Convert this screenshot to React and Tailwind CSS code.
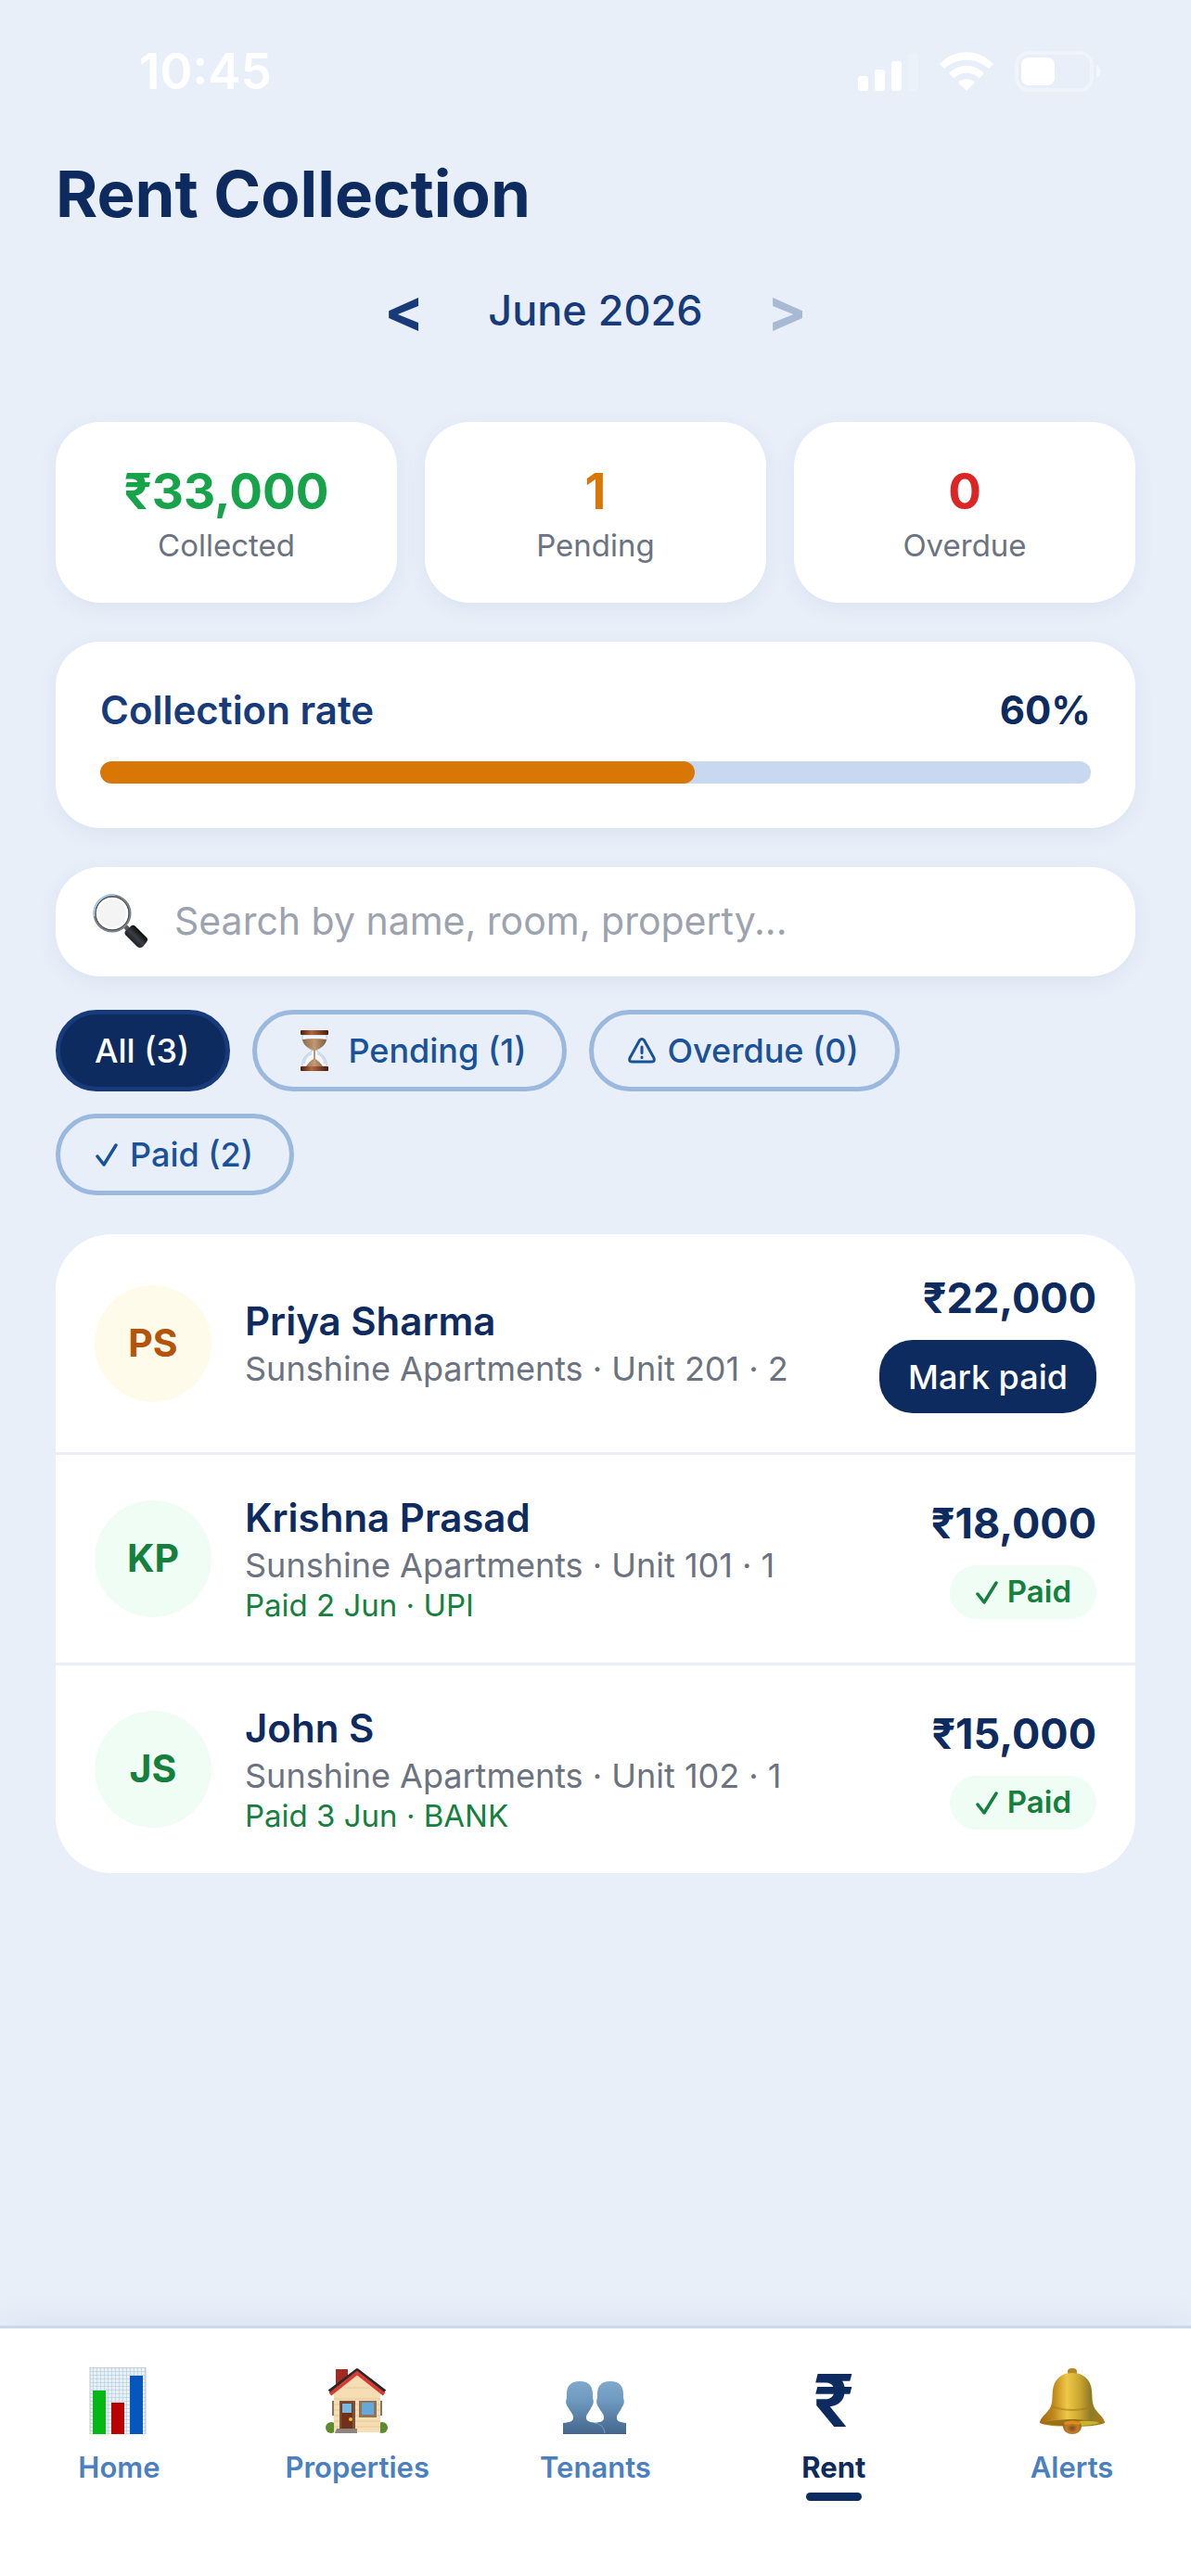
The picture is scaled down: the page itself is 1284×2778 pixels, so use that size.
const stats = [
    { value: '₹33,000', label: 'Collected', color: 'text-[#16a34a]' },
    { value: '1', label: 'Pending', color: 'text-[#d97706]' },
    { value: '0', label: 'Overdue', color: 'text-[#dc2626]' },
];

const payments = [
    { initials: 'PS', name: 'Priya Sharma', unit: 'Sunshine Apartments · Unit 201 · 2', amount: '₹22,000' },
    { initials: 'KP', name: 'Krishna Prasad', unit: 'Sunshine Apartments · Unit 101 · 1', amount: '₹18,000', paid: 'Paid 2 Jun · UPI' },
    { initials: 'JS', name: 'John S', unit: 'Sunshine Apartments · Unit 102 · 1', amount: '₹15,000', paid: 'Paid 3 Jun · BANK' },
];

const StatusIcons = () => (
    <div className="flex items-center gap-[23px]">
        <svg width="65" height="42" viewBox="0 0 65 42" fill="#fff" aria-hidden="true">
            <rect x="0" y="26" width="11" height="16" rx="3" />
            <rect x="18" y="19" width="11" height="23" rx="3" />
            <rect x="36" y="10" width="11" height="32" rx="3" />
            <rect x="54" y="1" width="11" height="41" rx="3" opacity="0.2" />
        </svg>
        <svg width="58" height="42" viewBox="0 0 58 42" fill="#fff" aria-hidden="true">
            <path d="M0 13C16-4 42-4 58 13L53 18C39 5.500 19 5.500 5 18Z" />
            <path d="M10 23C21 12 37 12 48 23L43 28.500C34.500 20.500 23.500 20.500 15 28.500Z" />
            <path d="M20 33C25 28 33 28 38 33L29 42Z" />
        </svg>
        <svg width="94" height="44" viewBox="0 0 94 44" fill="none" aria-hidden="true">
            <rect x="2" y="2" width="81" height="40" rx="13" stroke="#fff" strokeWidth="3.500" opacity="0.4" />
            <rect x="7" y="7" width="36" height="30" rx="8" fill="#fff" />
            <path d="M88 15C94 18 94 26 88 29Z" fill="#fff" opacity="0.5" />
        </svg>
    </div>
);

const SearchIcon = () => (
    <svg width="60" height="60" viewBox="0 0 60 60" aria-hidden="true">
        <defs>
            <linearGradient id="handle" x1="38" y1="50" x2="50" y2="38" gradientUnits="userSpaceOnUse">
                <stop offset="0" stopColor="#15171a" />
                <stop offset="0.5" stopColor="#3a3e44" />
                <stop offset="1" stopColor="#060606" />
            </linearGradient>
        </defs>
        <path d="M33 33L39 39" stroke="#55595d" strokeWidth="5" />
        <path d="M35 40L42 34Q44 33 46 35L58 47Q60 49 58 52L54 57Q51 59 48 57L35 44Q34 42 35 40Z" fill="url(#handle)" />
        <circle cx="21" cy="21" r="19" fill="#f4f4f4" stroke="#7d8489" strokeWidth="3" />
        <path d="M2 24A20 20 0 0 1 24 1" stroke="#a8c8ea" strokeWidth="2" fill="none" />
        <circle cx="21" cy="21" r="18" fill="none" stroke="#43474b" strokeWidth="1" />
        <circle cx="21" cy="21" r="16" fill="none" stroke="#fff" strokeWidth="2" />
    </svg>
);

const Hourglass = () => (
    <svg width="49" height="44" viewBox="-10 0 49 44" aria-hidden="true">
        <defs>
            <linearGradient id="wood" x1="0" x2="1">
                <stop offset="0" stopColor="#4c1d0d" />
                <stop offset="0.4" stopColor="#b3683f" />
                <stop offset="1" stopColor="#4a1b0c" />
            </linearGradient>
            <linearGradient id="sand" x1="0" x2="1">
                <stop offset="0" stopColor="#8b6a4d" />
                <stop offset="0.5" stopColor="#c29a72" />
                <stop offset="1" stopColor="#7d5b40" />
            </linearGradient>
        </defs>
        <path d="M2 5H28C29 14 24 18 17 22C24 26 29 31 28 39H2C1 31 6 26 13 22C6 18 1 14 2 5Z" fill="#f3f6fb" stroke="#bcc8d8" strokeWidth="1" />
        <path d="M2 10Q15 8 28 10C27 16 22 19 16 22V31Q20 33 24 39H6Q10 33 14 31V22C8 19 3 16 2 10Z" fill="url(#sand)" />
        <path d="M4 36C4 30 7 27 12 25M26 36C26 30 23 27 18 25" fill="none" stroke="#cddaf0" strokeWidth="2" />
        <rect width="30" height="5" rx="1" fill="url(#wood)" />
        <rect y="39" width="30" height="5" rx="1" fill="url(#wood)" />
    </svg>
);

const Warning = () => (
    <svg width="30" height="28" viewBox="0 0 30 28" fill="none" stroke="currentColor" strokeWidth="3" strokeLinejoin="round" strokeLinecap="round" aria-hidden="true">
        <path d="M12.500 3Q15 0 17.500 3L28 22Q29 26 26 26H4Q1 26 2 22Z" />
        <path d="M15 10V16.500M15 21V21.500" />
    </svg>
);

const Check = () => (
    <svg width="26" height="26" viewBox="0 0 26 26" fill="none" stroke="currentColor" strokeWidth="3.500" strokeLinecap="round" strokeLinejoin="round" aria-hidden="true">
        <path d="M3 15L10 24L23 3" />
    </svg>
);

const ChartIcon = () => (
    <svg width="72" height="72" viewBox="0 0 72 72" aria-hidden="true">
        <defs>
            <pattern id="grid" width="4" height="4" patternUnits="userSpaceOnUse">
                <rect width="4" height="4" fill="#eceff1" />
                <path d="M0 0H4M0 0V4" stroke="#b5d3ea" strokeWidth="1.500" />
            </pattern>
        </defs>
        <rect x="5" width="60" height="72" fill="url(#grid)" stroke="#c3c8cc" strokeWidth="1" />
        <rect x="8" y="25" width="14" height="47" fill="#05b817" />
        <rect x="28" y="38" width="14" height="34" fill="#b90202" />
        <rect x="48" y="9" width="14" height="63" fill="#0556bd" />
    </svg>
);

const HouseIcon = () => (
    <svg width="72" height="72" viewBox="0 0 72 72" aria-hidden="true">
        <rect x="13" y="2" width="13" height="24" fill="#a32a20" />
        <circle cx="8" cy="65" r="6" fill="#5c8c2e" />
        <circle cx="63" cy="65" r="6" fill="#5c8c2e" />
        <path d="M9 36H11V52H9ZM61 36H63V52H61Z" fill="#8a7663" />
        <path d="M11 28L36 6L61 28V70H11Z" fill="#f5deb3" />
        <path d="M11 34H61M11 40H61M11 46H61M11 52H61M11 58H61M11 64H61M22 22H50" stroke="#e5c896" strokeWidth="1" />
        <path d="M6 26L36 3L66 26" fill="none" stroke="#26292c" strokeWidth="4" strokeLinejoin="round" />
        <path d="M7 29L36 6L65 29" fill="none" stroke="#d83a31" strokeWidth="4" />
        <path d="M17 36H34V68H17Z" fill="#7a5238" />
        <path d="M19 38H31V67H19Z" fill="#733019" />
        <rect x="20" y="39" width="10" height="10" fill="#75b9e4" />
        <circle cx="29" cy="56" r="2" fill="#f1bd38" />
        <rect x="38" y="36" width="19" height="18" fill="#8f7558" />
        <rect x="41" y="38" width="13" height="13" fill="#65a8da" />
        <path d="M14 66H36V71H12Z" fill="#8d8580" />
    </svg>
);

const PeopleIcon = () => (
    <svg width="72" height="72" viewBox="0 0 72 72" aria-hidden="true">
        <defs>
            <linearGradient id="people" x1="0" y1="14" x2="0" y2="72" gradientUnits="userSpaceOnUse">
                <stop offset="0" stopColor="#80aaca" />
                <stop offset="0.35" stopColor="#709bc0" />
                <stop offset="1" stopColor="#43658b" />
            </linearGradient>
        </defs>
        <path d="M38 33C37 20 42 15 52 15C62 15 67 20 66 33C68 38 66 41 64 44C62 49 59 50 59 54C59 59 63 59 69 60V72H34V60C41 59 45 59 45 54C45 50 42 48 40 44C38 41 36 38 38 33Z" fill="url(#people)" />
        <path d="M5 33C4 20 9 15 19 15C29 15 34 20 33 33C35 38 33 41 31 44C29 49 26 50 26 54C26 59 31 59 37 60Q45 62 46 72H1V60C8 59 12 59 12 54C12 50 9 48 7 44C5 41 3 38 5 33Z" fill="url(#people)" />
        <path d="M35 60Q45 61 46 71" fill="none" stroke="#6fa3c6" strokeWidth="1" />
    </svg>
);

const BellIcon = () => (
    <svg width="72" height="72" viewBox="0 0 72 72" aria-hidden="true">
        <defs>
            <linearGradient id="gold" x1="0" x2="1">
                <stop offset="0" stopColor="#a3690f" />
                <stop offset="0.22" stopColor="#c08a1c" />
                <stop offset="0.42" stopColor="#eec848" />
                <stop offset="0.62" stopColor="#c9a42f" />
                <stop offset="0.78" stopColor="#8f7d26" />
                <stop offset="1" stopColor="#b07a17" />
            </linearGradient>
            <radialGradient id="clapper" cx="0.5" cy="0.6" r="0.6">
                <stop offset="0" stopColor="#7e4b1c" />
                <stop offset="0.5" stopColor="#c27c2c" />
                <stop offset="1" stopColor="#8a6420" />
            </radialGradient>
        </defs>
        <rect x="31" y="1" width="10" height="10" rx="4" fill="#b6881e" />
        <path d="M1 59C3 51 12 49 14 38C15 31 14 24 17 17C21 9 28 6 36 6C44 6 51 9 55 17C58 24 57 31 58 38C60 49 69 51 71 59C72 61 60 64 36 64C12 64 0 61 1 59Z" fill="url(#gold)" />
        <path d="M14 42Q36 50 58 42" fill="none" stroke="#a87c1b" strokeWidth="2" opacity="0.6" />
        <path d="M3 60Q36 52 69 60Q36 67 3 60Z" fill="#96701b" />
        <path d="M42 58Q60 57 66 60Q56 63 44 63Z" fill="#c7b32e" />
        <ellipse cx="36" cy="64" rx="10" ry="8" fill="url(#clapper)" />
        <path d="M27 59Q36 56 45 59L44 62Q36 60 28 62Z" fill="#e08d14" />
    </svg>
);

const tabs = [
    { label: 'Home', icon: <ChartIcon /> },
    { label: 'Properties', icon: <HouseIcon /> },
    { label: 'Tenants', icon: <PeopleIcon /> },
    { label: 'Rent', icon: <span className="text-[78px] leading-[72px] font-bold">₹</span>, active: true },
    { label: 'Alerts', icon: <BellIcon /> },
];

const chip = 'flex h-[88px] items-center gap-[12px] rounded-full border-[5px] pl-[37px] pr-[39px] text-[36px] font-medium';
const cardShadow = 'shadow-[0_6px_24px_rgba(13,43,94,0.06)]';

const App = () => {
    const rate = 60;

    return (
        <div className="flex min-h-screen flex-col bg-[#e8eff9] font-['Inter','Liberation_Sans',sans-serif] text-[#0d2b5e]">
            {/* Status bar */}
            <div className="flex items-center justify-between pt-[50px] pr-[96px] pl-[150px]">
                <span className="text-[53px] leading-[54px] font-semibold text-white">10:45</span>
                <StatusIcons />
            </div>

            <main className="flex flex-1 flex-col px-[60px]">
                <h1 className="mt-[60px] text-[69px] leading-[90px] font-bold">Rent Collection</h1>

                {/* Month picker */}
                <div className="mt-[36px] flex h-[90px] items-center justify-center gap-[69px] text-[#163a7a]">
                    <button aria-label="Previous month" className="text-[64px] leading-[90px] font-bold">&lt;</button>
                    <span className="text-[45px] font-medium">June 2026</span>
                    <button aria-label="Next month" disabled className="text-[64px] leading-[90px] font-bold text-[#a8b9d3]">&gt;</button>
                </div>

                {/* Totals */}
                <div className="mt-[75px] grid grid-cols-3 gap-[30px]">
                    {stats.map((stat) => (
                        <div key={stat.label} className={`rounded-[48px] bg-white pt-[42px] pb-[39px] text-center ${cardShadow}`}>
                            <div className={`mb-[3px] text-[53px] leading-[66px] font-bold ${stat.color}`}>{stat.value}</div>
                            <div className="text-[33px] leading-[45px] text-[#6b7280]">{stat.label}</div>
                        </div>
                    ))}
                </div>

                {/* Collection rate */}
                <section className={`mt-[42px] rounded-[48px] bg-white p-[48px] ${cardShadow}`}>
                    <div className="flex justify-between text-[42px] leading-[51px]">
                        <h2 className="font-semibold text-[#163a7a]">Collection rate</h2>
                        <span className="font-bold">{rate}%</span>
                    </div>
                    <div className="mt-[30px] h-[24px] overflow-hidden rounded-full bg-[#c8d8f0]">
                        <div className="h-full rounded-full bg-[#d97706]" style={{ width: `${rate}%` }} />
                    </div>
                </section>

                {/* Search */}
                <label className={`mt-[42px] flex h-[118px] items-center gap-[28px] rounded-[48px] bg-white px-[40px] ${cardShadow}`}>
                    <SearchIcon />
                    <input
                        type="search"
                        aria-label="Search rent payments"
                        placeholder="Search by name, room, property..."
                        className="min-w-0 flex-1 text-[41px] outline-none placeholder:text-[#9ca3af]"
                    />
                </label>

                {/* Filters */}
                <div className="mt-[36px] flex flex-wrap gap-[24px]">
                    <button className={`${chip} border-[#163a7a] bg-[#0d2b5e] text-white`}>All (3)</button>
                    <button className={`${chip} border-[#9bb9df] text-[#1a5299]`}><Hourglass />Pending (1)</button>
                    <button className={`${chip} border-[#9bb9df] text-[#1a5299]`}><Warning />Overdue (0)</button>
                    <button className={`${chip} border-[#9bb9df] text-[#1a5299]`}><Check />Paid (2)</button>
                </div>

                {/* Payments */}
                <ul className="mt-[42px] divide-y-[3px] divide-[#e8eff9] overflow-hidden rounded-[60px] bg-white">
                    {payments.map((p) => (
                        <li key={p.name} className="flex items-center gap-[36px] p-[42px]">
                            <div className={`flex size-[126px] shrink-0 items-center justify-center rounded-full text-[41px] font-bold ${p.paid ? 'bg-[#f0fdf4] text-[#15803d]' : 'bg-[#fffbeb] text-[#b45309]'}`}>
                                {p.initials}
                            </div>
                            <div className="min-w-0 flex-1">
                                <h3 className="text-[42px] leading-[51px] font-semibold">{p.name}</h3>
                                <p className="mt-[4px] text-[36px] leading-[45px] text-[#6b7280]">{p.unit}</p>
                                {p.paid && <p className="text-[33px] leading-[40px] text-[#15803d]">{p.paid}</p>}
                            </div>
                            <div className="flex flex-col items-end gap-[18px]">
                                <span className="text-[45px] leading-[54px] font-bold">{p.amount}</span>
                                {p.paid ? (
                                    <span className="flex h-[58px] items-center gap-[9px] rounded-full bg-[#f0fdf4] px-[27px] text-[33px] font-semibold text-[#15803d]">
                                        <Check />Paid
                                    </span>
                                ) : (
                                    <button className="h-[79px] rounded-[36px] bg-[#0d2b5e] px-[31px] text-[36px] font-medium text-white">Mark paid</button>
                                )}
                            </div>
                        </li>
                    ))}
                </ul>
            </main>

            {/* Tab bar */}
            <nav className="grid grid-cols-5 border-t-[3px] border-[#c8d8f0] bg-white pt-[42px] pb-[81px] shadow-[0_-6px_36px_rgba(13,43,94,0.06)]">
                {tabs.map((tab) => (
                    <a key={tab.label} href="#" aria-current={tab.active ? 'page' : undefined} className={`flex flex-col items-center ${tab.active ? 'font-bold text-[#0d2b5e]' : 'font-semibold text-[#4a80c0]'}`}>
                        <span className="h-[72px]">{tab.icon}</span>
                        <span className="mt-[18px] text-[31px] leading-[36px]">{tab.label}</span>
                        <span className={`mt-[9px] h-[9px] w-[60px] rounded-full ${tab.active ? 'bg-[#0d2b5e]' : ''}`} />
                    </a>
                ))}
            </nav>
        </div>
    );
};

export default App;
